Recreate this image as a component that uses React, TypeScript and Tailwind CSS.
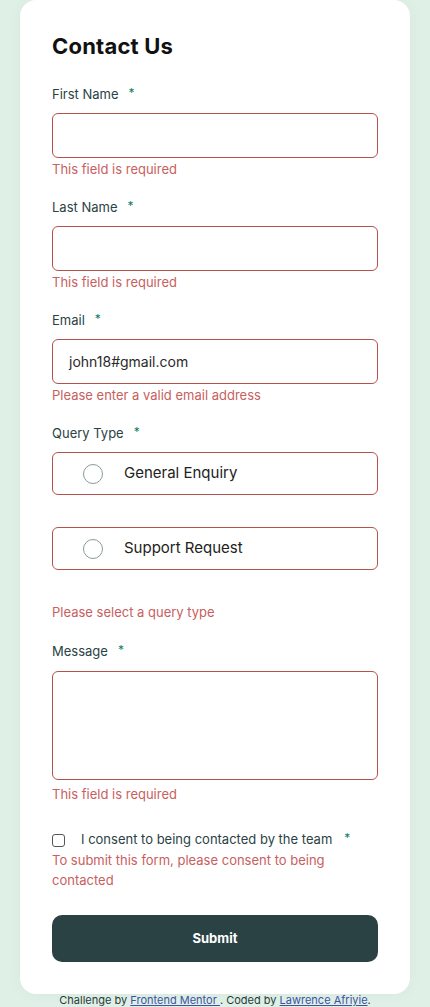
const font = { fontFamily: 'Inter, "Noto Sans", sans-serif' };

function Label({ text }: { text: string }) {
  return (
    <div className="flex items-center h-5 text-[13px] text-[#2a4244]">
      <span>{text}</span>
      <span className="ml-[10px] text-[#0c7d69] text-[12px] -mt-1">*</span>
    </div>
  );
}

function ErrorText({ children, className = 'mt-[3px]' }: { children: React.ReactNode; className?: string }) {
  return <p className={`text-[13px] leading-4 text-[#c86060] ${className}`}>{children}</p>;
}

function TextField({ label, value, error }: { label: string; value?: string; error: string }) {
  return (
    <div className="mt-[21px] first:mt-0">
      <Label text={label} />
      <div className="mt-2 h-[45px] rounded-md border border-[#b8504e] flex items-center px-4 text-[14px] text-[#2a2a2a]">
        {value}
      </div>
      <ErrorText>{error}</ErrorText>
    </div>
  );
}

function RadioOption({ label }: { label: string }) {
  return (
    <div className="h-[43px] rounded-md border border-[#b8504e] flex items-center pl-[30px]">
      <span className="w-5 h-5 rounded-full border border-[#8a9a9a]" />
      <span className="ml-[21px] text-[15px] text-[#222]">{label}</span>
    </div>
  );
}

export default function App() {
  return (
    <div className="min-h-[1007px] bg-[#dff1e7] px-5" style={font}>
      <div className="bg-white rounded-2xl px-8 pt-8 pb-8 shadow-[0_0_16px_rgba(0,0,0,0.04)]">
        <h1 className="text-[22px] leading-7 font-bold text-[#111] tracking-[0.2px]">Contact Us</h1>
        <div className="mt-[25px]">
          <TextField label="First Name" error="This field is required" />
          <TextField label="Last Name" error="This field is required" />
          <TextField label="Email" value="john18#gmail.com" error="Please enter a valid email address" />
        </div>

        <div className="mt-[21px]">
          <Label text="Query Type" />
          <div className="mt-2 flex flex-col gap-[32px]">
            <RadioOption label="General Enquiry" />
            <RadioOption label="Support Request" />
          </div>
          <ErrorText className="mt-[34px]">Please select a query type</ErrorText>
        </div>

        <div className="mt-[22px]">
          <Label text="Message" />
          <div className="mt-[9px] h-[109px] rounded-md border border-[#b8504e]" />
          <ErrorText className="mt-[6px]">This field is required</ErrorText>
        </div>

        <div className="mt-[28px]">
          <div className="flex items-center h-5 text-[13px] text-[#2a4244]">
            <span className="w-[13px] h-[13px] rounded-[3px] border border-[#555] bg-white" />
            <span className="ml-[16px]">I consent to being contacted by the team</span>
            <span className="ml-[12px] text-[#0c7d69] text-[12px] -mt-1">*</span>
          </div>
          <p className="text-[13px] leading-5 text-[#c86060]">
            To submit this form, please consent to being contacted
          </p>
        </div>

        <button className="mt-[25px] w-full h-[47px] rounded-[10px] bg-[#2a4244] text-white text-[13px] font-bold">
          Submit
        </button>
      </div>
      <p className="text-center text-[11px] leading-3 text-[#2a3a3a]">
        Challenge by{' '}
        <a className="underline text-[#3e52a3]">Frontend Mentor </a>. Coded by{' '}
        <a className="underline text-[#3e52a3]">Lawrence Afriyie</a>.
      </p>
    </div>
  );
}
